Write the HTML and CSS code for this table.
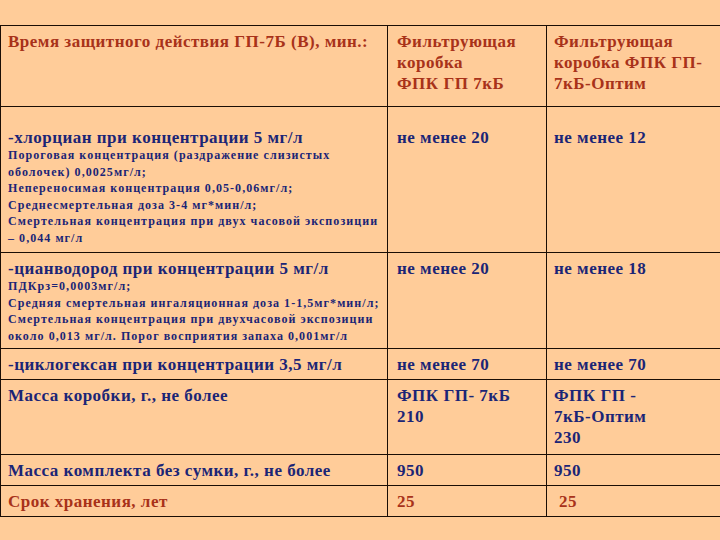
FILE: index.html
```html
<!DOCTYPE html>
<html lang="ru">
<head>
<meta charset="utf-8">
<link rel="stylesheet" href="styles.css">
</head>
<body>
<table class="grid">
  <colgroup>
    <col class="c1"><col class="c2"><col class="c3">
  </colgroup>
  <tr class="r-head red">
    <td>Время защитного действия ГП-7Б (В), мин.:</td>
    <td class="mid">Фильтрующая<br>коробка<br>ФПК ГП 7кБ</td>
    <td>Фильтрующая<br>коробка ФПК ГП-<br>7кБ-Оптим</td>
  </tr>
  <tr class="r-cl blue">
    <td>
      <div class="big">-хлорциан при концентрации 5 мг/л</div>
      <div class="small">Пороговая концентрация (раздражение слизистых<br>оболочек) 0,0025мг/л;<br>Непереносимая концентрация 0,05-0,06мг/л;<br>Среднесмертельная доза 3-4 мг*мин/л;<br>Смертельная концентрация при двух часовой экспозиции<br>– 0,044 мг/л</div>
    </td>
    <td class="mid">не менее 20</td>
    <td>не менее 12</td>
  </tr>
  <tr class="r-hcn blue">
    <td>
      <div class="big">-цианводород при концентрации 5 мг/л</div>
      <div class="small">ПДКрз=0,0003мг/л;<br>Средняя смертельная ингаляционная доза 1-1,5мг*мин/л;<br>Смертельная концентрация при двухчасовой экспозиции<br>около 0,013 мг/л. Порог восприятия запаха 0,001мг/л</div>
    </td>
    <td class="mid">не менее 20</td>
    <td>не менее 18</td>
  </tr>
  <tr class="r-one blue">
    <td>-циклогексан при концентрации 3,5 мг/л</td>
    <td class="mid">не менее 70</td>
    <td>не менее 70</td>
  </tr>
  <tr class="r-mass blue">
    <td>Масса коробки, г., не более</td>
    <td class="mid">ФПК ГП- 7кБ<br>210</td>
    <td>ФПК ГП -<br>7кБ-Оптим<br>230</td>
  </tr>
  <tr class="r-one blue">
    <td>Масса комплекта без сумки, г., не более</td>
    <td class="mid">950</td>
    <td>950</td>
  </tr>
  <tr class="r-one red">
    <td>Срок хранения, лет</td>
    <td class="mid">25</td>
    <td class="shift">25</td>
  </tr>
</table>
</body>
</html>
```

FILE: styles.css
```css
html, body {
  margin: 0;
  padding: 0;
  background: #ffcc99;
  overflow: hidden;
}
body {
  width: 720px;
  height: 540px;
  font-family: "Liberation Serif", "Times New Roman", serif;
  font-weight: bold;
}
.grid {
  border-collapse: collapse;
  table-layout: fixed;
  width: 760px;
  margin-top: 25px;
  margin-left: 0;
}
.c1 { width: 387px; }
.c2 { width: 159px; }
.c3 { width: 214px; }
.grid td {
  border: 1px solid #1a0d05;
  vertical-align: top;
  padding: 5px 4px 0 7px;
  font-size: 17px;
  letter-spacing: 0.5px;
  line-height: 21px;
  white-space: nowrap;
}
.grid td.mid { padding-left: 9px; }
.grid td.shift { padding-left: 12px; }
.red { color: #a8321a; }
.blue { color: #1b2576; }
.r-head td { height: 75px; }
.r-cl td { height: 125px; padding-top: 20px; }
.r-hcn td { height: 90px; }
.r-one td { height: 25px; }
.r-mass td { height: 69px; }
.big { font-size: 17px; line-height: 21px; }
.small {
  font-size: 12px;
  letter-spacing: 1.05px;
  line-height: 16.6px;
  margin-top: -1px;
}
```
